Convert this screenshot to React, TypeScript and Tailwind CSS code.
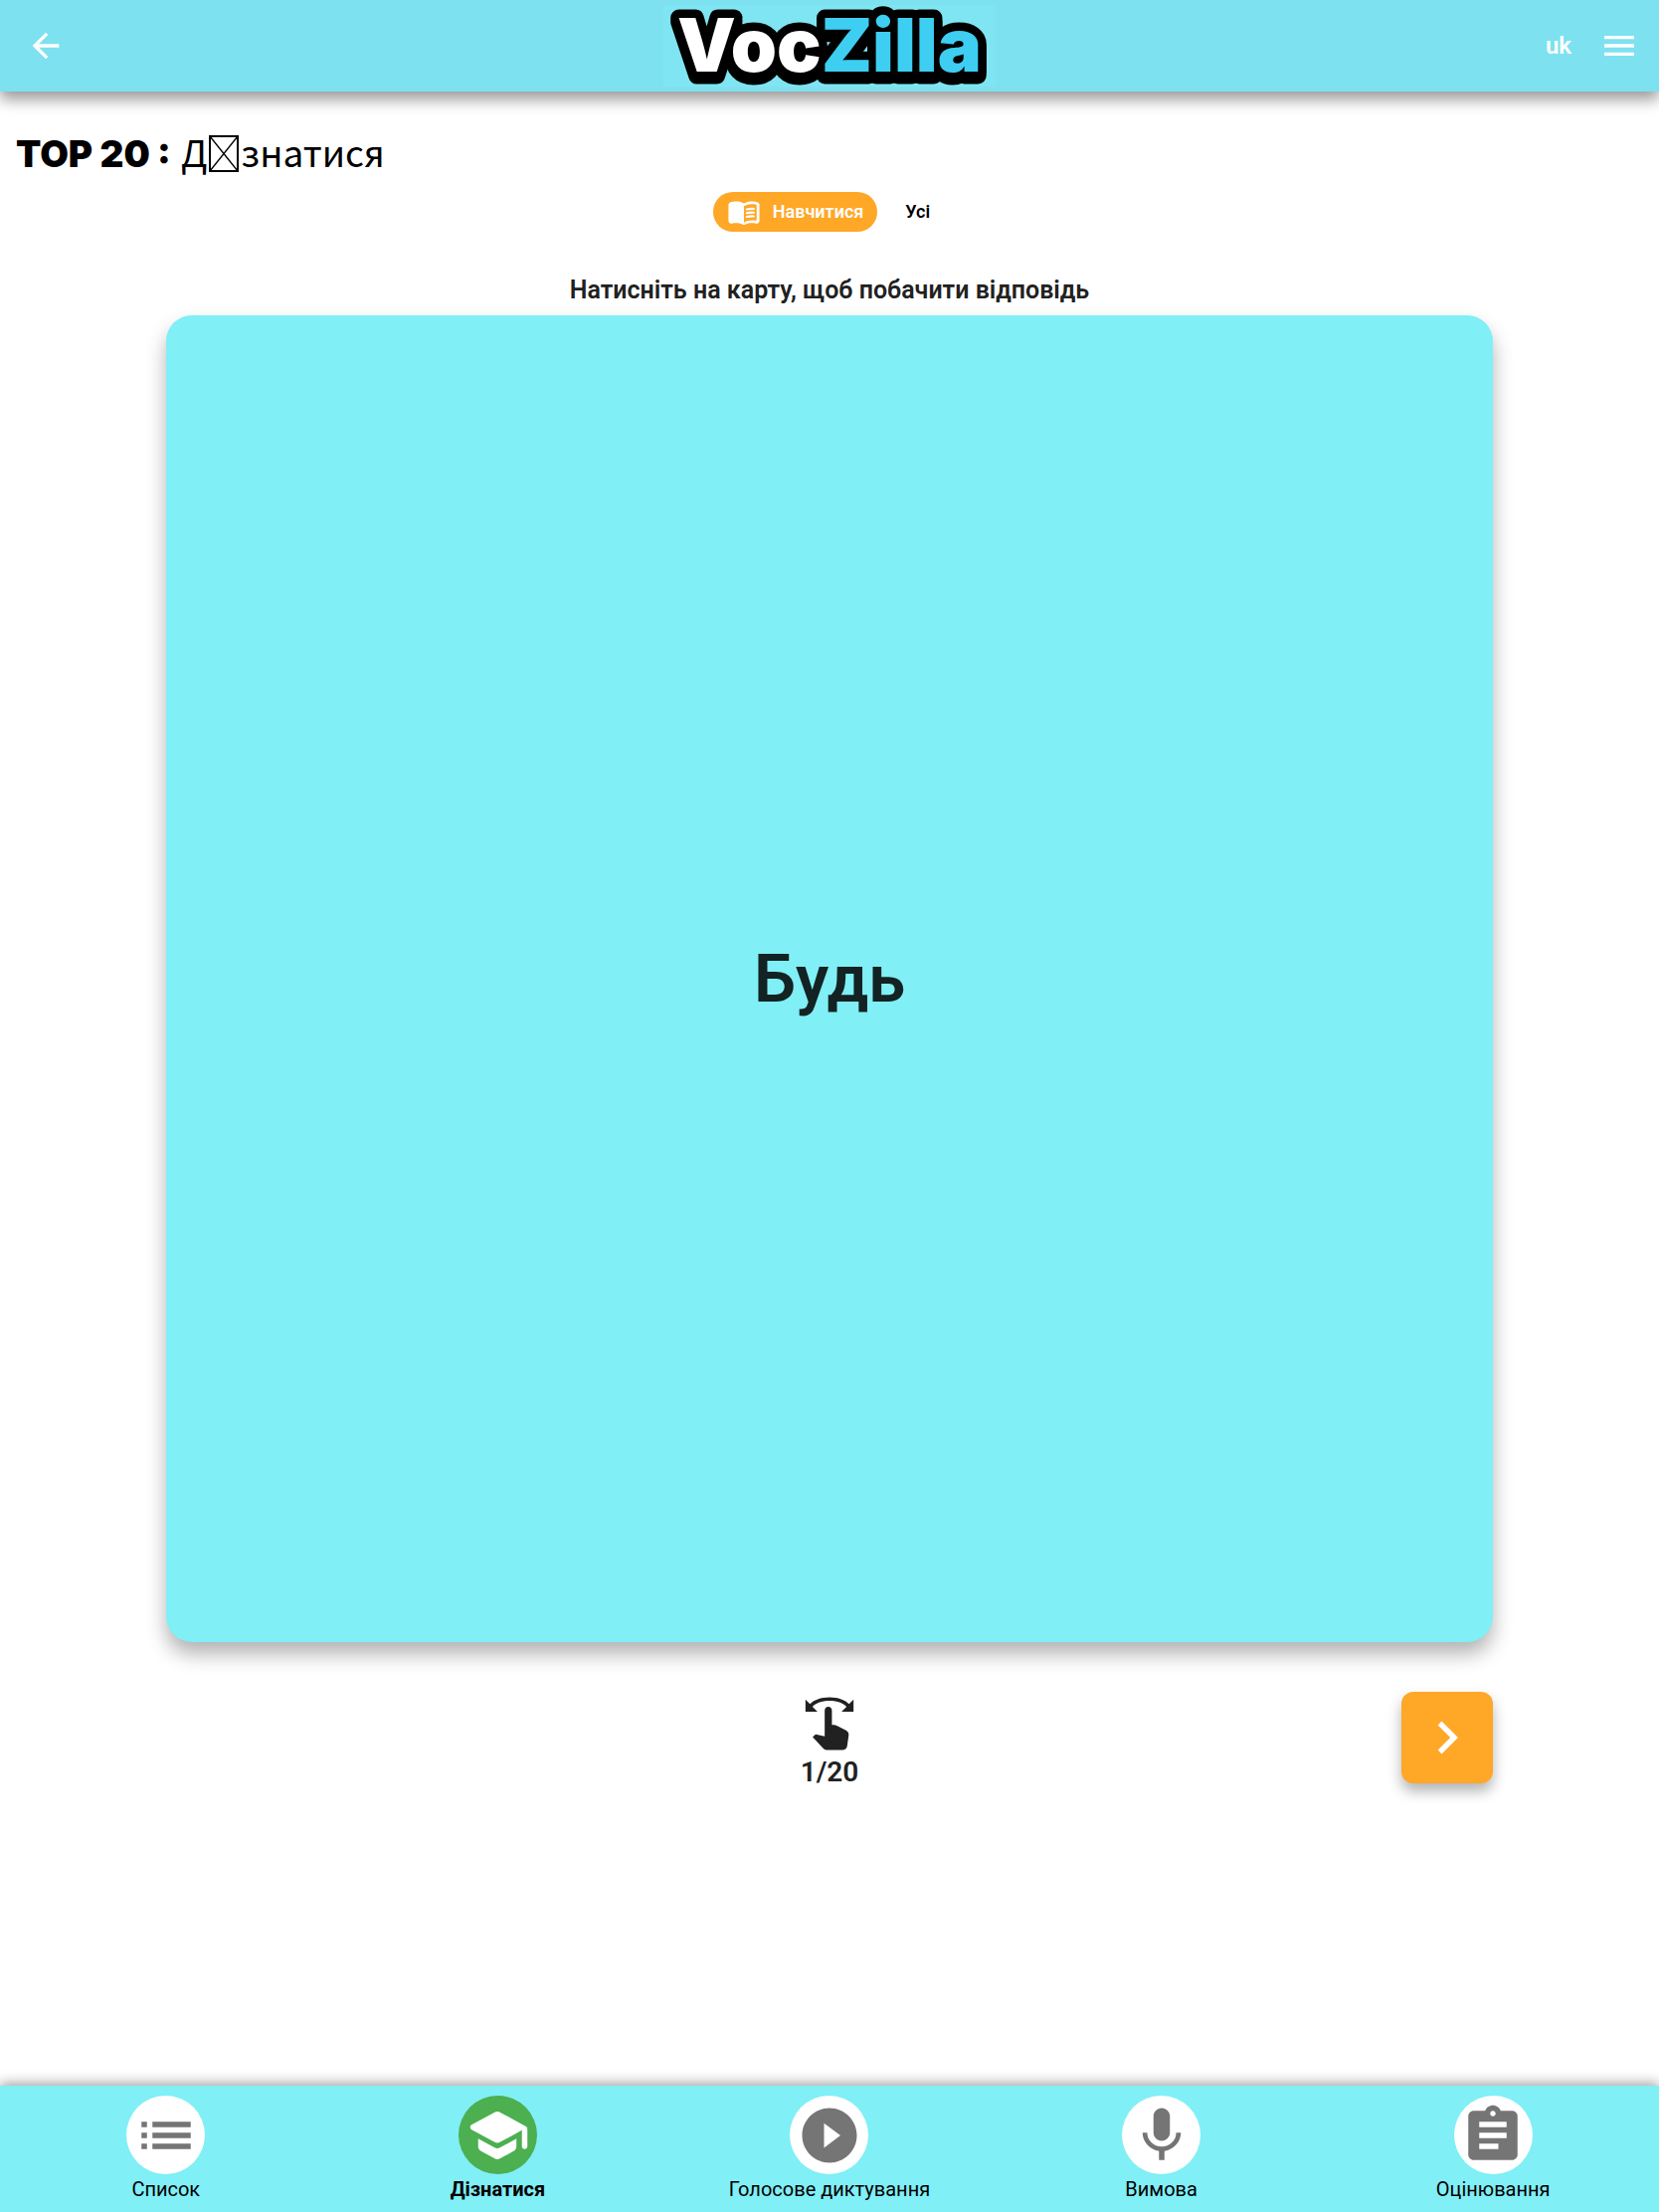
import React from "react";
import {
  MdArrowBack,
  MdAssignment,
  MdList,
  MdMenu,
  MdMic,
  MdNavigateNext,
  MdPlayCircleFilled,
  MdSwipe,
} from "react-icons/md";

function SchoolIcon({ className }: { className?: string }) {
  return (
    <svg viewBox="0 0 24 24" fill="currentColor" className={className} aria-hidden="true">
      <path d="M5 13.18v2.81c0 .73.4 1.41 1.04 1.76l5 2.73c.6.33 1.32.33 1.92 0l5-2.73c.64-.35 1.04-1.03 1.04-1.76v-2.81l-6.04 3.3c-.6.33-1.32.33-1.92 0L5 13.18zm6.04-9.66l-8.43 4.6c-.69.38-.69 1.38 0 1.76l8.43 4.6c.6.33 1.32.33 1.92 0L21 10.09V16c0 .55.45 1 1 1s1-.45 1-1V9.59c0-.37-.2-.7-.52-.88l-9.52-5.19c-.6-.32-1.32-.32-1.92 0z" />
    </svg>
  );
}

function BookIcon({ className }: { className?: string }) {
  const line =
    "M13.98 11.01c-.32 0-.61-.2-.71-.52-.13-.39.09-.82.48-.94 1.54-.5 3.53-.66 5.36-.45.41.05.71.42.66.83-.05.41-.42.71-.83.66-1.62-.19-3.39-.04-4.73.39-.08.01-.16.03-.23.03z";
  return (
    <svg viewBox="0 0 24 24" fill="currentColor" className={className} aria-hidden="true">
      <path d="M17.5 4.5c-1.95 0-4.05.4-5.5 1.5-1.45-1.1-3.55-1.5-5.5-1.5-1.45 0-2.99.22-4.28.79C1.49 5.62 1 6.33 1 7.14v11.28c0 1.3 1.22 2.26 2.48 1.94.98-.25 2.02-.36 3.02-.36 1.56 0 3.22.26 4.56.92.6.3 1.28.3 1.87 0 1.34-.67 3-.92 4.56-.92 1 0 2.04.11 3.02.36 1.26.33 2.48-.63 2.48-1.94V7.14c0-.81-.49-1.52-1.22-1.85-1.28-.57-2.82-.79-4.27-.79zM21 17.23c0 .63-.58 1.09-1.2.98-.75-.14-1.53-.2-2.3-.2-1.7 0-4.15.65-5.5 1.5V8c1.35-.85 3.8-1.5 5.5-1.5.92 0 1.83.09 2.7.28.46.1.8.51.8.98v9.47z" />
      <path d={line} />
      <path d={line} transform="translate(0 2.66)" />
      <path d={line} transform="translate(0 5.32)" />
    </svg>
  );
}

function Logo() {
  return (
    <svg
      viewBox="0 0 334 92"
      className="h-[92px] w-[334px] overflow-visible font-['Inter'] text-[74px] font-black"
      role="img"
      aria-label="VocZilla"
    >
      <defs>
        <linearGradient id="logo-fill" gradientUnits="userSpaceOnUse" x1="0" y1="0" x2="334" y2="0">
          <stop offset="0.474" stopColor="#fff" />
          <stop offset="0.474" stopColor="#3dcef2" />
        </linearGradient>
      </defs>
      <path d="M0 5h334v82H0z" fill="#80e5f2" />
      <text
        x="167"
        y="72"
        textAnchor="middle"
        fill="url(#logo-fill)"
        stroke="#000"
        strokeWidth="17"
        strokeLinejoin="round"
        className="drop-shadow-[0_4px_0_#000] [paint-order:stroke]"
      >
        VocZilla
      </text>
    </svg>
  );
}

const tabs = [
  { label: "Список", icon: <MdList className="size-[66px]" />, active: false },
  { label: "Дізнатися", icon: <SchoolIcon className="size-[66px]" />, active: true },
  { label: "Голосове диктування", icon: <MdPlayCircleFilled className="size-[66px]" />, active: false },
  { label: "Вимова", icon: <MdMic className="size-[66px]" />, active: false },
  { label: "Оцінювання", icon: <MdAssignment className="size-[66px]" />, active: false },
];

export default function App() {
  return (
    <div className="flex min-h-screen flex-col bg-white font-['Roboto',sans-serif] text-black">
      <header className="z-10 grid h-[92px] grid-cols-[1fr_auto_1fr] items-center bg-[#7de1f0] px-5 text-white shadow-[0_8px_14px_rgba(0,0,0,0.4)]">
        <button type="button" aria-label="Назад" className="justify-self-start p-1.5">
          <MdArrowBack className="size-10" />
        </button>
        <Logo />
        <div className="flex items-center gap-7 justify-self-end">
          <button type="button" className="text-2xl font-semibold">
            uk
          </button>
          <button type="button" aria-label="Меню">
            <MdMenu className="size-10" />
          </button>
        </div>
      </header>

      <main className="flex flex-1 flex-col">
        <h1 className="mt-[30px] h-[62px] px-4 text-[37px] leading-[60px]">
          <span className="font-['Inter'] font-black">TOP 20 :</span>
          <span className="ml-2.5 font-['Noto_Sans_CJK_JP',sans-serif]">
            Д
            <svg
              viewBox="0 0 30 38"
              className="mx-[2px] inline-block h-[38px] w-[30px] align-[-6px]"
              fill="none"
              stroke="currentColor"
              role="img"
              aria-label="і"
            >
              <path d="M1 1h28v35H1z" strokeWidth="2" />
              <path d="M1 1l28 35M29 1L1 36" strokeWidth="1.3" />
            </svg>
            знатися
          </span>
        </h1>

        <div className="mt-[9px] flex items-center justify-center gap-2 text-lg font-semibold">
          <button
            type="button"
            aria-pressed="true"
            className="flex h-10 items-center rounded-full bg-[#ffa726] px-3.5 text-white"
          >
            <BookIcon className="mr-3 size-[34px]" />
            Навчитися
          </button>
          <button type="button" aria-pressed="false" className="h-10 pr-4 pl-5">
            Усі
          </button>
        </div>

        <section className="mx-[10%] mt-[41px] flex flex-col text-[#212121]">
          <h2 className="mb-[7px] text-center text-[25px] leading-9 font-semibold">
            Натисніть на карту, щоб побачити відповідь
          </h2>
          <button
            type="button"
            className="flex aspect-square w-full items-center justify-center rounded-[26px] bg-[#80eff6] text-[67px] leading-none font-semibold text-[#132222] shadow-[0_12px_20px_rgba(0,0,0,0.3)]"
          >
            Будь
          </button>

          <div className="mt-[50px] grid grid-cols-3 items-start">
            <div />
            <div className="flex flex-col items-center pt-[3px]">
              <MdSwipe className="size-[58px]" />
              <span className="text-[28px] leading-10 font-semibold">1/20</span>
            </div>
            <button
              type="button"
              aria-label="Далі"
              className="flex size-[92px] items-center justify-center justify-self-end rounded-xl bg-[#ffa726] text-white shadow-[0_8px_14px_rgba(0,0,0,0.3)]"
            >
              <MdNavigateNext className="size-[66px]" />
            </button>
          </div>
        </section>
      </main>

      <nav className="grid h-[127px] grid-cols-5 bg-[#80eff6] shadow-[0_-2px_12px_rgba(0,0,0,0.4)]">
        {tabs.map((tab) => (
          <button key={tab.label} type="button" className="flex flex-col items-center pt-2.5">
            <span
              className={
                tab.active
                  ? "flex size-[79px] items-center justify-center rounded-full bg-[#4caf50] text-white"
                  : "flex size-[79px] items-center justify-center rounded-full bg-white text-[#757575]"
              }
            >
              {tab.icon}
            </span>
            <span className={tab.active ? "text-xl leading-[30px] font-bold" : "text-xl leading-[30px]"}>
              {tab.label}
            </span>
          </button>
        ))}
      </nav>
    </div>
  );
}
